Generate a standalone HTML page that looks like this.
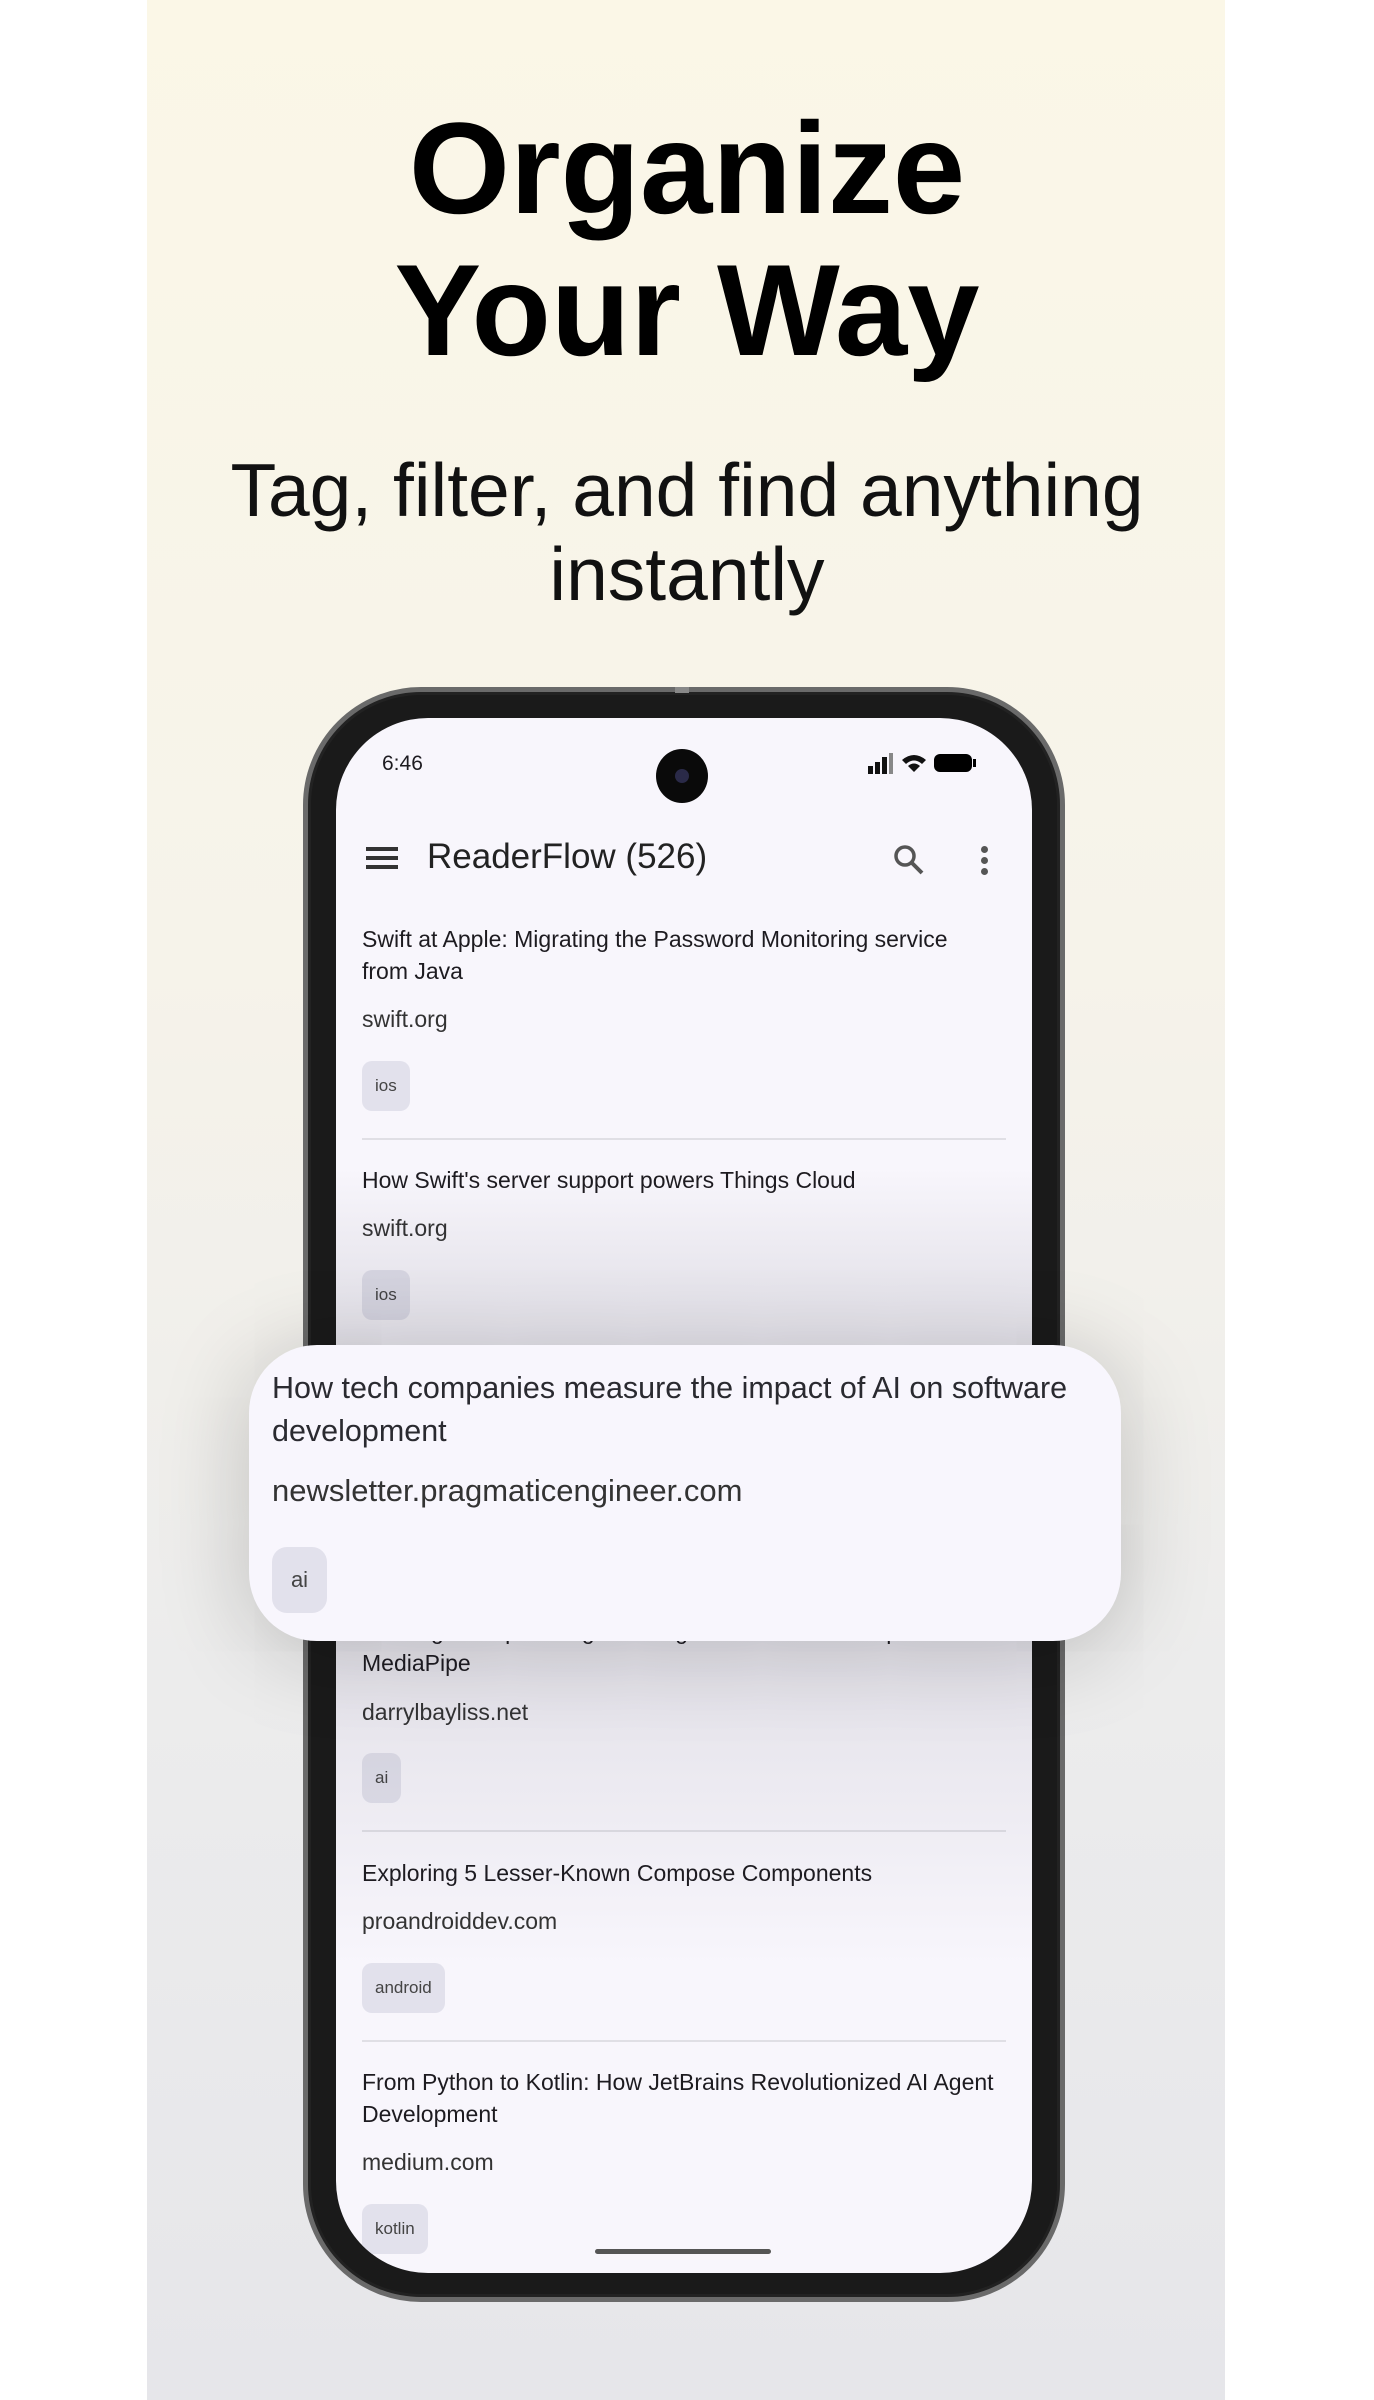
<!DOCTYPE html>
<html><head><meta charset="utf-8"><style>
*{margin:0;padding:0;box-sizing:border-box}
body{width:1374px;height:2400px;background:#fff;position:relative;overflow:hidden;font-family:"Liberation Sans",sans-serif}
.panel{position:absolute;left:147px;top:0;width:1078px;height:2400px;background:linear-gradient(#fbf7e7 0%,#f6f3ea 40%,#ececec 70%,#e6e6ea 100%)}
.h1{position:absolute;left:0;width:1374px;text-align:center;font-weight:900;font-size:130px;line-height:142px;top:97px;color:#000;letter-spacing:0px}
.sub{position:absolute;left:0;width:1374px;text-align:center;font-size:75px;line-height:84px;top:448px;color:#111}
.phone{position:absolute;left:303px;top:687px;width:762px;height:1615px;border-radius:118px;background:#1a1a1a;border:5px solid #6a6a6a;box-shadow:inset 0 0 0 3px #222}
.screen{position:absolute;left:336px;top:718px;width:696px;height:1555px;border-radius:92px;background:#f8f6fc;overflow:hidden}
.t{position:absolute;color:#1d1b20}
.it{position:absolute;left:26px;font-size:23px;color:#1d1b20;line-height:32px}
.dm{position:absolute;left:26px;font-size:23px;color:#333}
.chip{position:absolute;left:26px;height:50px;border-radius:10px;background:#e2e1ec;font-size:17px;color:#444;line-height:50px;padding:0 13px}
.div{position:absolute;left:26px;width:644px;height:2px;background:#e0dfe5}
.dim{position:absolute;left:0;top:0;width:100%;height:100%;background:linear-gradient(rgba(0,0,0,0) 0,rgba(0,0,0,0) 450px,rgba(40,40,60,.08) 560px,rgba(40,40,60,.12) 700px,rgba(40,40,60,.08) 1000px,rgba(0,0,0,0) 1250px)}
.card{position:absolute;left:249px;top:1345px;width:872px;height:296px;border-radius:68px;background:#f8f6fd;box-shadow:0 10px 90px rgba(0,0,0,.22)}
</style></head><body>
<div class="panel"></div>
<div class="h1">Organize<br>Your Way</div>
<div class="sub">Tag, filter, and find anything<br>instantly</div>
<div class="phone"></div>
<div style="position:absolute;left:675px;top:687px;width:14px;height:6px;background:#888"></div>
<div class="screen">
 <div class="t" style="left:46px;top:34px;font-size:21px">6:46</div>
 <div style="position:absolute;left:320px;top:31px;width:52px;height:54px;border-radius:50%;background:#0a0a0a"><div style="position:absolute;left:19px;top:20px;width:14px;height:14px;border-radius:50%;background:#2a2a48"></div></div>
 <svg style="position:absolute;left:530px;top:32px" width="140" height="26" viewBox="0 0 140 26">
  <rect x="2" y="16" width="5" height="8" fill="#111"/><rect x="9" y="12" width="5" height="12" fill="#111"/><rect x="16" y="7" width="5" height="17" fill="#111"/><rect x="23" y="3" width="4" height="21" fill="#888"/>
  <path d="M36 10 Q48 0 60 10 L56 14 Q48 7 40 14Z" fill="#111"/><path d="M42 16 Q48 11 54 16 L48 22Z" fill="#111"/>
  <rect x="68" y="4" width="38" height="18" rx="6" fill="#000"/><rect x="107" y="9" width="3" height="8" fill="#000"/>
 </svg>
 <div style="position:absolute;left:30px;top:129px;width:32px;height:4px;background:#333;box-shadow:0 9px 0 #333,0 18px 0 #333"></div>
 <div class="t" style="left:91px;top:119px;font-size:35px;color:#222">ReaderFlow (526)</div>
 <svg style="position:absolute;left:556px;top:125px" width="34" height="34" viewBox="0 0 34 34"><circle cx="13" cy="13" r="9" fill="none" stroke="#555" stroke-width="3.5"/><path d="M20 20 L30 30" stroke="#555" stroke-width="4"/></svg>
 <div style="position:absolute;left:645px;top:128px;width:7px;height:7px;border-radius:50%;background:#555;box-shadow:0 11px 0 #555,0 22px 0 #555"></div>

 <div class="it" style="top:205px">Swift at Apple: Migrating the Password Monitoring service<br>from Java</div>
 <div class="dm" style="top:288px">swift.org</div>
 <div class="chip" style="top:343px">ios</div>
 <div class="div" style="top:420px"></div>
 <div class="it" style="top:446px">How Swift's server support powers Things Cloud</div>
 <div class="dm" style="top:497px">swift.org</div>
 <div class="chip" style="top:552px">ios</div>
 <div class="div" style="top:629px"></div>
 <div class="it" style="top:897px">Building a simple AI agent using Kotlin and MediaPipe... <br>MediaPipe</div>
 <div class="dm" style="top:981px">darrylbayliss.net</div>
 <div class="chip" style="top:1035px">ai</div>
 <div class="div" style="top:1112px"></div>
 <div class="it" style="top:1139px">Exploring 5 Lesser-Known Compose Components</div>
 <div class="dm" style="top:1190px">proandroiddev.com</div>
 <div class="chip" style="top:1245px">android</div>
 <div class="div" style="top:1322px"></div>
 <div class="it" style="top:1348px">From Python to Kotlin: How JetBrains Revolutionized AI Agent<br>Development</div>
 <div class="dm" style="top:1431px">medium.com</div>
 <div class="chip" style="top:1486px">kotlin</div>
 <div class="dim"></div>
 <div style="position:absolute;left:259px;top:1531px;width:176px;height:5px;border-radius:3px;background:#555"></div>
</div>
<div class="card">
 <div style="position:absolute;left:23px;top:22px;font-size:30.5px;line-height:43px;color:#2a2a30">How tech companies measure the impact of AI on software<br>development</div>
 <div style="position:absolute;left:23px;top:128px;font-size:31px;color:#333">newsletter.pragmaticengineer.com</div>
 <div style="position:absolute;left:23px;top:202px;width:55px;height:66px;border-radius:15px;background:#e2e1ec;font-size:22px;color:#444;line-height:66px;text-align:center">ai</div>
</div>
</body></html>
